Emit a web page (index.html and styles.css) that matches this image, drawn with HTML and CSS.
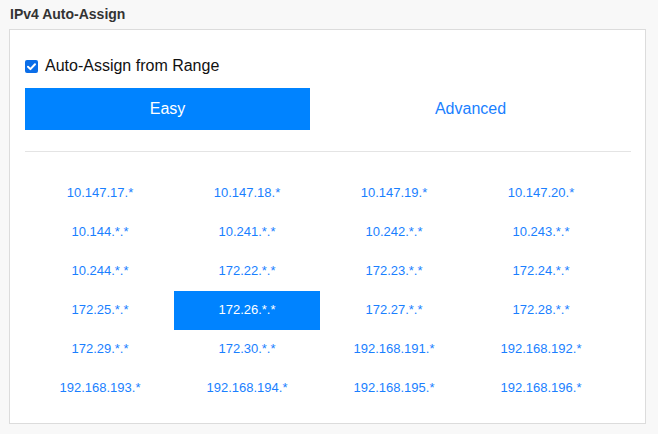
FILE: index.html
```html
<!DOCTYPE html>
<html>
<head>
<meta charset="utf-8">
<link rel="stylesheet" href="styles.css">
</head>
<body>
<div class="page">
  <div class="title">IPv4 Auto-Assign</div>
  <div class="panel">
    <label class="check">
      <span class="box"><svg width="13" height="13" viewBox="0 0 13 13"><rect x="0" y="0" width="13" height="13" rx="2" fill="#0b6ee8"/><path d="M3 6.8 L5.4 9.1 L10 4.2" stroke="#fff" stroke-width="2" fill="none" stroke-linecap="round" stroke-linejoin="round"/></svg></span>
      <span class="check-text">Auto-Assign from Range</span>
    </label>
    <div class="tabs">
      <div class="tab tab-easy">Easy</div>
      <div class="tab tab-adv">Advanced</div>
    </div>
    <div class="divider"></div>
    <div class="grid">
      <div class="cell">10.147.17.*</div>
      <div class="cell">10.147.18.*</div>
      <div class="cell">10.147.19.*</div>
      <div class="cell">10.147.20.*</div>
      <div class="cell">10.144.*.*</div>
      <div class="cell">10.241.*.*</div>
      <div class="cell">10.242.*.*</div>
      <div class="cell">10.243.*.*</div>
      <div class="cell">10.244.*.*</div>
      <div class="cell">172.22.*.*</div>
      <div class="cell">172.23.*.*</div>
      <div class="cell">172.24.*.*</div>
      <div class="cell">172.25.*.*</div>
      <div class="cell selected">172.26.*.*</div>
      <div class="cell">172.27.*.*</div>
      <div class="cell">172.28.*.*</div>
      <div class="cell">172.29.*.*</div>
      <div class="cell">172.30.*.*</div>
      <div class="cell">192.168.191.*</div>
      <div class="cell">192.168.192.*</div>
      <div class="cell">192.168.193.*</div>
      <div class="cell">192.168.194.*</div>
      <div class="cell">192.168.195.*</div>
      <div class="cell">192.168.196.*</div>
    </div>
  </div>
</div>
</body>
</html>
```
FILE: styles.css
```css
html, body {
  margin: 0;
  padding: 0;
  background: #f8f8f8;
  font-family: "Liberation Sans", Arial, sans-serif;
}
.page {
  width: 658px;
  height: 434px;
  padding: 0 0 0 9px;
  box-sizing: border-box;
}
.title {
  font-size: 14px;
  font-weight: bold;
  color: #333;
  padding: 6px 0 0 1px;
  height: 29px;
  box-sizing: border-box;
}
.panel {
  width: 637px;
  height: 395px;
  box-sizing: border-box;
  background: #fff;
  border: 1px solid #dcdcdc;
  padding: 29px 14px 0 15px;
}
.check {
  display: flex;
  align-items: center;
  height: 14px;
}
.box {
  display: block;
  width: 13px;
  height: 13px;
  margin-right: 7px;
}
.box svg { display: block; }
.check-text {
  font-size: 16px;
  color: #111;
}
.tabs {
  display: flex;
  margin-top: 15px;
  height: 42px;
}
.tab {
  display: flex;
  align-items: center;
  justify-content: center;
  font-size: 16px;
}
.tab-easy {
  width: 285px;
  background: #0083ff;
  color: #fff;
}
.tab-adv {
  flex: 1;
  color: #1a7fff;
}
.divider {
  height: 1px;
  background: #e4e4e4;
  margin-top: 21px;
}
.grid {
  display: grid;
  grid-template-columns: repeat(4, 146px);
  grid-auto-rows: 39px;
  column-gap: 1px;
  margin-top: 22px;
  margin-left: 2px;
}
.cell {
  display: flex;
  align-items: center;
  justify-content: center;
  font-size: 13px;
  color: #1a7fff;
  padding-bottom: 3px;
  box-sizing: border-box;
}
.cell.selected {
  background: #0083ff;
  color: #fff;
}
```
